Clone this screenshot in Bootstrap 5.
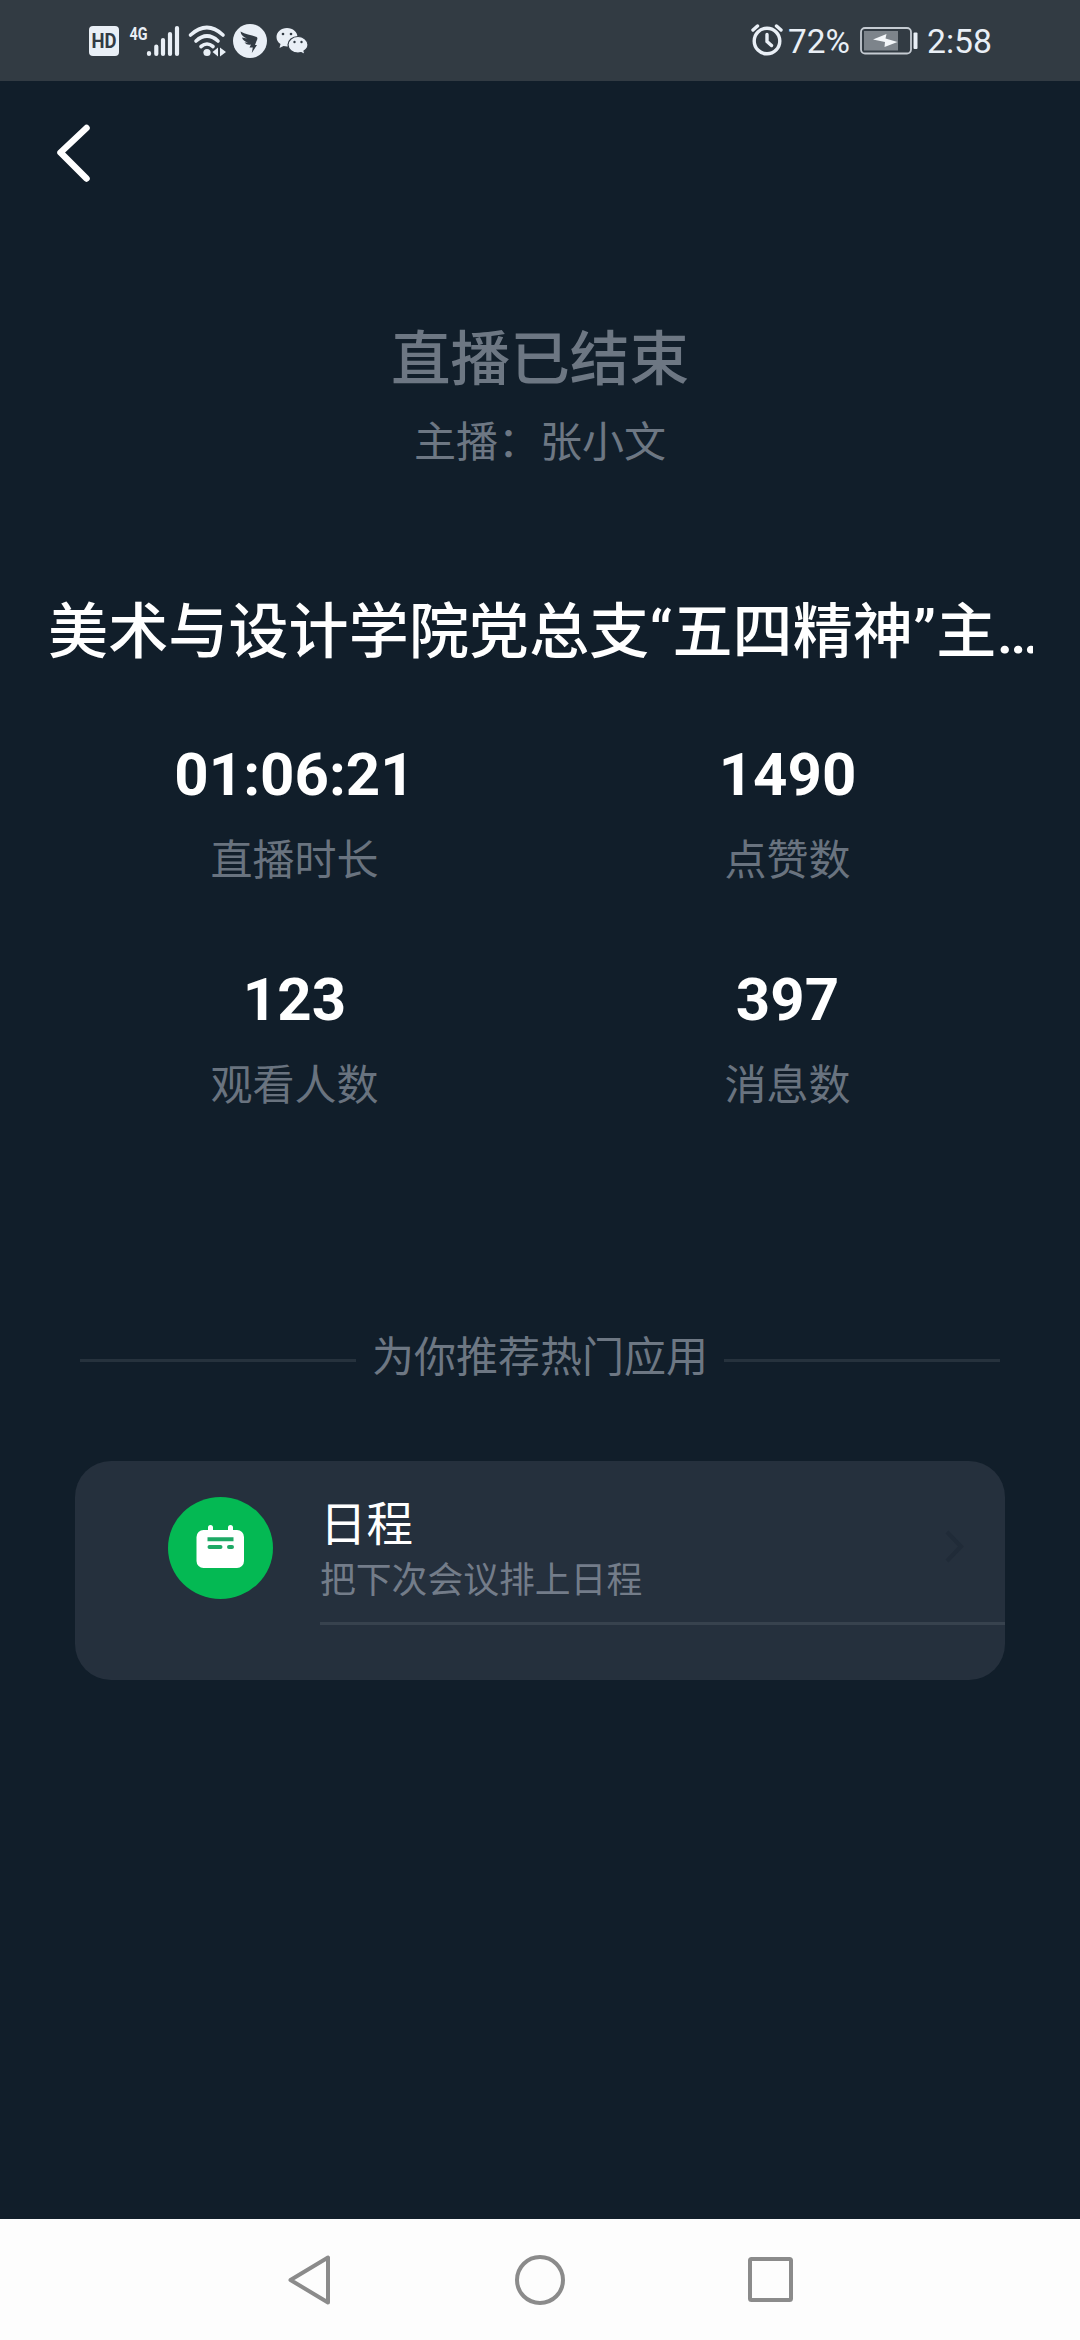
<!DOCTYPE html>
<html lang="zh-CN">
<head>
<meta charset="utf-8">
<meta name="viewport" content="width=device-width, initial-scale=1">
<title>直播已结束</title>
<link href="https://cdn.jsdelivr.net/npm/bootstrap@5.3.0/dist/css/bootstrap.min.css" rel="stylesheet">
<style>
  body { background: #111e2a; font-family: "Noto Sans CJK SC", sans-serif; color: #fff; }
  svg { display: block; flex: none; overflow: visible; }
  .screen { width: 1080px; height: 2340px; }
  .latin { font-family: Roboto, "Noto Sans CJK SC", sans-serif; }
  .status { height: 81px; background: #323b43; padding: 0 89px; color: #e9eff6; font-size: 34px; line-height: 40px; }
  .topnav { height: 231px; padding: 43px 55px; }
  .dim { color: #6d7783; }
  .ended { font-size: 59.6px; line-height: 84px; font-weight: 500; }
  .host { font-size: 42px; line-height: 60px; margin-top: 13px; }
  .live-title { font-size: 60px; letter-spacing: .15px; line-height: 90px; font-weight: 500; margin: 119px 48px 0; white-space: nowrap; overflow: hidden; width: 985px; }
  .stats { margin: 62px 46px 0 48px; }
  .stat { height: 225px; }
  .num { font-size: 60px; line-height: 70px; font-weight: 700; }
  .lbl { font-size: 42px; line-height: 60px; margin-top: 17px; color: #69737f; }
  .rec { margin: 134px 80px 0; font-size: 42px; line-height: 60px; gap: 16px; }
  .rule { height: 3px; background: #26323d; margin-top: 13px; }
  .app-card { margin: 77px 75px 0; height: 219px; background: #25303d; border: 0; border-radius: 36px; overflow: hidden; }
  .app-row { padding-left: 93px; }
  .app-body { margin-left: 47px; height: 164px; border-bottom: 3px solid #37424e; padding: 29px 40px 0 0; }
  .app-name { font-size: 46.5px; line-height: 62px; color: #fff; }
  .app-sub { font-size: 35.8px; line-height: 50px; color: #737c89; }
  .sysnav { height: 121px; background: #fdfdfd; gap: 183px; }
</style>
</head>
<body>
<div class="screen d-flex flex-column overflow-hidden">
  <header class="status latin d-flex align-items-center justify-content-between">
    <div class="d-flex align-items-center">
      <svg width="30" height="30" viewBox="0 0 30 30"><rect width="30" height="30" rx="4" fill="#e9eff6"/><text x="15" y="22" text-anchor="middle" font-family="Roboto" font-weight="700" font-size="20" textLength="25" lengthAdjust="spacingAndGlyphs" fill="#323b44">HD</text></svg>
      <svg class="ms-2" width="52" height="30" viewBox="127 25 52 30"><text x="129.500" y="38.500" font-family="Roboto" font-weight="700" font-size="18" textLength="18" lengthAdjust="spacingAndGlyphs" fill="#e9eff6">4G</text>
        <g stroke="#e9eff6" stroke-width="4.200" stroke-linecap="round"><path d="M149 52v1M156.300 45.500V53M163 39V53M170 33V53M177 27V53"/></g></svg>
      <svg width="46" height="30" viewBox="179 25 46 30"><g fill="none" stroke="#e9eff6" stroke-width="3.600" stroke-linecap="round"><path d="M190.500 34Q207 19 223 34M196 40Q207 30 218 40M201 45.500Q207 40.500 213 45.500"/></g><circle cx="207" cy="51.500" r="3.600" fill="#e9eff6"/><path d="M218 46.500v9l-5.500-4.500zM220 46.500v9l6-4.500z" fill="#e9eff6"/></svg>
      <svg width="42" height="34" viewBox="225 24 42 34"><circle cx="250" cy="41" r="17" fill="#e9eff6"/><path d="M240.500 31.500C245 34 251 35 256 36.800C258 37.500 257.500 39 256.500 41L255 45H257L251.800 53L252.800 47.500H249.500L251 44.500Q247 45.500 244.500 42.500L248 42.500Q243 41 242 37.500L247 38.500Q241 36 240.500 31.500Z" fill="#323b44"/></svg>
      <svg width="42" height="28" viewBox="267 27 42 28"><path d="M287 28c-6 0-10.500 4-10.500 9 0 3 1.500 5.500 4 7l-1 4 4-2 3.500.500c6 0 10.500-4 10.500-9.500 0-5-4.500-9-10.500-9z" fill="#e9eff6"/><path d="M298 36.500c-5.500 0-10 3.700-10 8.300s4.500 8.200 10 8.200l3-.500 4 2-1-3.500c2.500-1.500 4-3.700 4-6.200 0-4.600-4.500-8.300-10-8.300z" fill="#e9eff6" stroke="#323b44" stroke-width="1.200"/><g fill="#323b44"><circle cx="283" cy="34" r="1.300"/><circle cx="291" cy="34" r="1.300"/><circle cx="294.500" cy="42" r="1.200"/><circle cx="301.500" cy="42" r="1.200"/></g></svg>
    </div>
    <div class="d-flex align-items-center">
      <svg width="32" height="31" viewBox="750 25 32 31"><g fill="none" stroke="#e9eff6" stroke-width="3.400" stroke-linecap="round"><circle cx="766" cy="41" r="12.800"/><path d="M766 34.500V41.500L770.500 45.500M752 30l4.500-4M780 30l-4.500-4"/></g></svg>
      <svg width="65" height="32" viewBox="0 0 65 32"><text x="5" y="28" font-family="Roboto" font-size="34" textLength="62" lengthAdjust="spacingAndGlyphs" fill="#e9eff6">72%</text></svg>
      <svg class="ms-2" width="62" height="28" viewBox="855 27 62 28"><rect x="860" y="28" width="50" height="25.500" rx="4" fill="none" stroke="#c5cbd2" stroke-width="1.800"/><rect x="863" y="31" width="34" height="19.500" fill="#7d848b"/><path d="M872 39.500l13.500-5.500-1 4.500 12 3.500-13 5 .500-5z" fill="#f3f6f9"/><rect x="912.500" y="32.500" width="4" height="16.500" rx="1" fill="#e9eff6"/></svg>
      <svg width="73" height="32" viewBox="0 0 73 32"><text x="9" y="28" font-family="Roboto" font-size="34" textLength="65" lengthAdjust="spacingAndGlyphs" fill="#e9eff6">2:58</text></svg>
    </div>
  </header>

  <nav class="topnav">
    <svg width="36" height="58" viewBox="55 124 36 58"><path d="M86.500 128L60.500 152.500L86.500 178.500" fill="none" stroke="#fff" stroke-width="6.500" stroke-linecap="round" stroke-linejoin="round"/></svg>
  </nav>

  <main class="flex-grow-1">
    <div class="ended dim text-center">直播已结束</div>
    <div class="host dim text-center">主播：张小文</div>
    <div class="live-title latin">美术与设计学院党总支“五四精神”主…</div>

    <div class="stats row g-0 text-center">
      <div class="stat col-6"><div class="num latin">01:06:21</div><div class="lbl">直播时长</div></div>
      <div class="stat col-6"><div class="num latin">1490</div><div class="lbl">点赞数</div></div>
      <div class="stat col-6"><div class="num latin">123</div><div class="lbl">观看人数</div></div>
      <div class="stat col-6"><div class="num latin">397</div><div class="lbl">消息数</div></div>
    </div>

    <div class="rec dim d-flex align-items-center"><div class="rule flex-fill"></div><span>为你推荐热门应用</span><div class="rule flex-fill"></div></div>

    <div class="app-card card">
      <div class="app-row d-flex">
        <svg class="mt-4" width="105" height="126" viewBox="168 1485 105 126"><ellipse cx="220.500" cy="1548" rx="52.500" ry="51" fill="#04b953"/><rect x="196.500" y="1530" width="47.500" height="38" rx="7" fill="#fff"/><path d="M210.500 1527.500v5M230.500 1527.500v5" stroke="#fff" stroke-width="5" stroke-linecap="round"/><path d="M207.500 1539.300h26" stroke="#1da965" stroke-width="4"/><path d="M209.500 1547h11M229 1547h3" stroke="#1da965" stroke-width="4" stroke-linecap="round"/></svg>
        <div class="app-body flex-fill d-flex justify-content-between">
          <div><div class="app-name">日程</div><div class="app-sub">把下次会议排上日程</div></div>
          <svg class="mt-5" width="20" height="36" viewBox="946 1538 20 36"><path d="M948 1532L962 1546.500L948 1561" fill="none" stroke="#202b38" stroke-width="4"/></svg>
        </div>
      </div>
    </div>
  </main>

  <footer class="sysnav d-flex align-items-center justify-content-center">
    <svg width="44" height="50" viewBox="0 0 44 50"><path d="M40 2.500V47.500L2.500 25Z" fill="none" stroke="#8b8b8b" stroke-width="4" stroke-linejoin="round"/></svg>
    <svg width="50" height="50" viewBox="0 0 50 50"><circle cx="25" cy="25" r="23" fill="none" stroke="#8b8b8b" stroke-width="4"/></svg>
    <svg width="45" height="45" viewBox="0 0 45 45"><rect x="2" y="2" width="41" height="41" rx="1.500" fill="none" stroke="#8b8b8b" stroke-width="4"/></svg>
  </footer>
</div>
<script src="https://cdn.jsdelivr.net/npm/bootstrap@5.3.0/dist/js/bootstrap.bundle.min.js"></script>
</body>
</html>
